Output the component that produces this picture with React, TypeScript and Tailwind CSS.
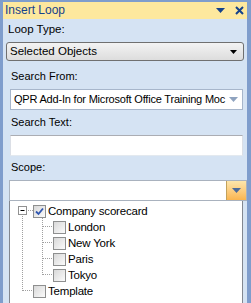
import React from 'react';

const font = { fontFamily: '"Liberation Sans", Arial, sans-serif' };

function Checkbox({ checked }: { checked?: boolean }) {
  return (
    <span className="relative size-[13px] shrink-0 border border-[#8e8f8f] bg-gradient-to-br from-[#d8d8d8] to-[#fbfbfb]">
      {checked && (
        <svg className="absolute left-[1px] top-[1px]" width="9" height="9" viewBox="0 0 9 9">
          <path d="M1 4.5 L3.5 7 L8 1.5" fill="none" stroke="#2f56b0" strokeWidth="1.8" />
        </svg>
      )}
    </span>
  );
}

function TreeRow({ indent, label, checked }: { indent: number; label: string; checked?: boolean }) {
  return (
    <div className="flex h-[16px] items-center" style={{ paddingLeft: indent }}>
      <Checkbox checked={checked} />
      <span className="ml-[2px] text-[11.5px] leading-[16px] tracking-[-0.2px] text-black">{label}</span>
    </div>
  );
}

export default function App() {
  return (
    <div
      className="flex h-[303px] w-[251px] flex-col overflow-hidden border-l-[3px] border-r-[4px] border-t-[2px] border-[#7f9dcc] bg-[#d5e3f3]"
      style={font}
    >
      <div className="flex h-[17px] shrink-0 items-center justify-between bg-[#fde89e] pl-[2px] pr-[3px]">
        <span className="text-[12px] leading-[17px] text-[#15428b]">Insert Loop</span>
        <div className="flex items-center gap-[10px]">
          <svg width="9" height="5" viewBox="0 0 9 5">
            <path d="M0 0 H9 L4.5 5 Z" fill="#15428b" />
          </svg>
          <svg width="9" height="9" viewBox="0 0 9 9">
            <path d="M1 1 L8 8 M8 1 L1 8" stroke="#15428b" strokeWidth="2" />
          </svg>
        </div>
      </div>

      <div className="ml-[5px] mt-[3px] h-[14px] text-[11.5px] leading-[14px] text-black">Loop Type:</div>
      <div className="ml-[3px] mr-[3px] mt-[6px] flex h-[19px] items-center justify-between rounded-[3px] border border-[#707070] bg-gradient-to-b from-[#f3f3f3] to-[#dddddd] pl-[3px] pr-[6px]">
        <span className="text-[11.5px] leading-[17px] text-black">Selected Objects</span>
        <svg width="7" height="4" viewBox="0 0 7 4">
          <path d="M0 0 H7 L3.5 4 Z" fill="#000" />
        </svg>
      </div>

      <div className="ml-[8px] mt-[8px] h-[14px] text-[11px] leading-[14px] text-black">Search From:</div>
      <div className="ml-[7px] mr-[4px] mt-[6px] flex h-[21px] items-center justify-between border border-[#a7b6cb] bg-white pl-[3px] pr-[4px]">
        <span className="whitespace-nowrap text-[11px] leading-[19px] tracking-[-0.2px] text-black">
          QPR Add-In for Microsoft Office Training Moc
        </span>
        <svg className="ml-[2px] shrink-0" width="9" height="5" viewBox="0 0 9 5">
          <path d="M0 0 H9 L4.5 5 Z" fill="#8fa3bf" />
        </svg>
      </div>

      <div className="ml-[8px] mt-[5px] h-[14px] text-[11px] leading-[14px] text-black">Search Text:</div>
      <div className="ml-[7px] mr-[4px] mt-[6px] h-[21px] border border-t-[#abadb3] border-x-[#dbdfe6] border-b-[#e3e9ef] bg-white" />

      <div className="ml-[8px] mt-[4px] h-[14px] text-[11px] leading-[14px] text-black">Scope:</div>
      <div className="ml-[6px] mt-[6px] flex h-[21px] border border-[#a9b2be] bg-white">
        <div className="flex-1" />
        <div className="flex w-[20px] items-center justify-center border-l border-[#c2a25c] bg-gradient-to-b from-[#fde6ab] to-[#f9b54f]">
          <svg width="9" height="5" viewBox="0 0 9 5">
            <path d="M0 0 H9 L4.5 5 Z" fill="#4d6b99" />
          </svg>
        </div>
      </div>

      <div className="relative ml-[6px] mr-[4px] flex-1 border-l border-r border-[#828790] bg-white pt-[2px]">
        <svg className="absolute left-0 top-0" width="240" height="102" viewBox="0 0 240 102">
          <rect x="8.5" y="5.5" width="8" height="8" fill="#fff" stroke="#919191" />
          <path d="M10.5 9.5 H14.5" stroke="#000" />
          <g stroke="#a0a0a0" strokeDasharray="1 1">
            <path d="M18 9.5 H23" />
            <path d="M12.5 15 V90" />
            <path d="M13 89.5 H23" />
            <path d="M32.5 17 V74" />
            <path d="M33 25.5 H43" />
            <path d="M33 41.5 H43" />
            <path d="M33 57.5 H43" />
            <path d="M33 73.5 H43" />
          </g>
        </svg>
        <TreeRow indent={23} label="Company scorecard" checked />
        <TreeRow indent={43} label="London" />
        <TreeRow indent={43} label="New York" />
        <TreeRow indent={43} label="Paris" />
        <TreeRow indent={43} label="Tokyo" />
        <TreeRow indent={23} label="Template" />
      </div>
    </div>
  );
}
